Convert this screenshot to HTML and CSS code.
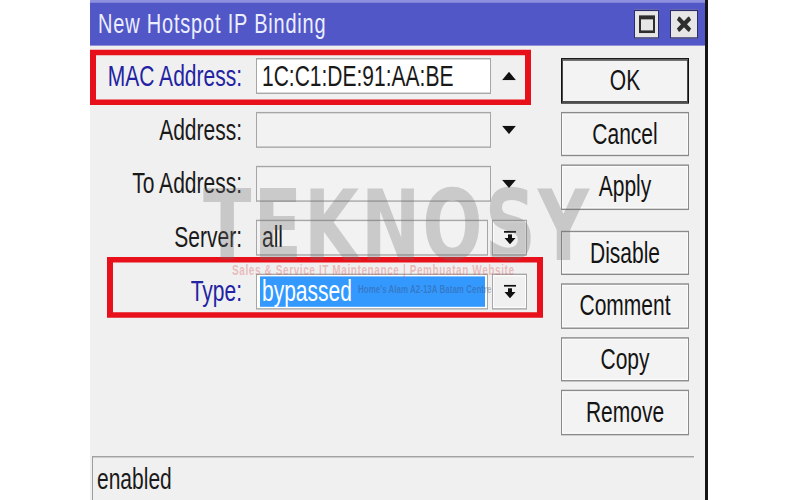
FILE: index.html
```html
<!DOCTYPE html>
<html lang="en">
<head>
  <meta charset="UTF-8">
  <title>New Hotspot IP Binding</title>
  <link rel="stylesheet" href="styles.css">
</head>
<body>

<div class="page">
<div class="window">
  <div class="titlebar">
    <span class="title">New Hotspot IP Binding</span>
    <div class="title-buttons">
      <div class="tbtn">
        <svg width="16" height="13" viewBox="0 0 16 13"><rect x="1" y="1.5" width="14" height="10.5" fill="none" stroke="#2e2e2e" stroke-width="2"/><rect x="0" y="0" width="16" height="3" fill="#2e2e2e"/></svg>
      </div>
      <div class="tbtn close">
        <svg width="18" height="11" viewBox="0 0 18 11"><path d="M3 1 L15 10 M15 1 L3 10" stroke="#2e2e2e" stroke-width="3.6"/></svg>
      </div>
    </div>
  </div>

  <div class="window-body">
    <div class="form">
      <div class="row mark mark-mac">
        <label class="blue">MAC Address:</label>
        <div class="field white">1C:C1:DE:91:AA:BE</div>
        <span class="arrow"><svg width="14" height="6" viewBox="0 0 14 6"><polygon points="0,6 14,6 7,0" fill="#111"/></svg></span>
      </div>
      <div class="row">
        <label>Address:</label>
        <div class="field"></div>
        <span class="arrow"><svg width="14" height="6" viewBox="0 0 14 6"><polygon points="0,0 14,0 7,6" fill="#111"/></svg></span>
      </div>
      <div class="row">
        <label>To Address:</label>
        <div class="field"></div>
        <span class="arrow"><svg width="14" height="6" viewBox="0 0 14 6"><polygon points="0,0 14,0 7,6" fill="#111"/></svg></span>
      </div>
      <div class="row">
        <label>Server:</label>
        <div class="field short">all</div>
        <span class="combo-btn"><svg width="12" height="10" viewBox="0 0 12 10"><rect x="0" y="0" width="12" height="1.4" fill="#111"/><rect x="4" y="2.6" width="4" height="2.8" fill="#111"/><polygon points="0.5,5.2 11.5,5.2 6,9.8" fill="#111"/></svg></span>
      </div>
      <div class="row mark mark-type">
        <label class="blue">Type:</label>
        <div class="field short white select"><span class="selected">bypassed</span></div>
        <span class="combo-btn"><svg width="12" height="10" viewBox="0 0 12 10"><rect x="0" y="0" width="12" height="1.4" fill="#111"/><rect x="4" y="2.6" width="4" height="2.8" fill="#111"/><polygon points="0.5,5.2 11.5,5.2 6,9.8" fill="#111"/></svg></span>
      </div>
    </div>

    <div class="buttons">
      <button class="default">OK</button>
      <button>Cancel</button>
      <button>Apply</button>
      <button class="spaced">Disable</button>
      <button>Comment</button>
      <button>Copy</button>
      <button>Remove</button>
    </div>
  </div>

  <div class="statusbar">
    <div class="status">enabled</div>
  </div>

  <!-- watermark stamped over the screenshot -->
  <div class="watermark">TEKNOSY</div>
  <div class="watermark-line line1">Sales &amp; Service IT Maintenance | Pembuatan Website</div>
  <div class="watermark-line line2">Home's Alam A2-13A Batam Centre</div>
</div>
</div>

</body>
</html>
```

FILE: styles.css
```css
body {
  margin: 0;
  background: #fff;
  font-family: "Liberation Sans", Arial, sans-serif;
  color: #1a1a1a;
}

.page {
  height: 500px;
  overflow: hidden;
}

/* the source shot is stretched vertically, so the window is laid out
   at natural size and scaled */
.window {
  position: relative;
  box-sizing: border-box;
  width: 618px;
  height: 362px;
  margin-left: 90px;
  background: #f0f0f0;
  border-right: 3px solid #151515;
  display: flex;
  flex-direction: column;
  overflow: hidden;
  transform: scaleY(1.382);
  transform-origin: top left;
}

.titlebar {
  box-sizing: border-box;
  height: 33px;
  background: #5257c7;
  border-top: 2px solid #8c90de;
  display: flex;
  align-items: center;
  justify-content: space-between;
  padding: 0 7px 0 8px;
}

.title {
  color: #eceeff;
  font-size: 20px;
  letter-spacing: 0.8px;
}

.title-buttons {
  display: flex;
  gap: 11px;
}

.tbtn {
  box-sizing: border-box;
  width: 25px;
  height: 21px;
  background: #e6e6e6;
  border: 1px solid #2b2d6b;
  display: flex;
  align-items: center;
  justify-content: center;
}

.tbtn.close {
  width: 28px;
}

.window-body {
  display: flex;
  padding-top: 9px;
}

.form {
  width: 471px;
  flex: none;
  display: flex;
  flex-direction: column;
  gap: 13px;
}

.row {
  position: relative;
  display: flex;
  align-items: center;
  height: 26px;
}

.row label {
  width: 152px;
  margin-right: 14px;
  text-align: right;
  font-size: 21px;
}

.row label.blue {
  color: #2323a3;
}

.field {
  box-sizing: border-box;
  width: 235px;
  height: 26px;
  padding: 0 5px;
  border: 1px solid #a6a6a6;
  background: #f2f2f2;
  font-size: 21px;
  line-height: 24px;
  white-space: nowrap;
}

.field.white {
  background: #fff;
}

.field.short {
  width: 232px;
}

.field.select {
  padding: 1px 2px 1px 3px;
}

.selected {
  display: block;
  height: 22px;
  line-height: 22px;
  padding-left: 2px;
  background: #3399ff;
  color: #fff;
}

.arrow {
  width: 36px;
  display: flex;
  justify-content: center;
}

.combo-btn {
  box-sizing: border-box;
  width: 35px;
  height: 26px;
  margin-left: 4px;
  border: 1px solid #a6a6a6;
  box-shadow: inset 0 0 0 1px #fcfcfc;
  display: flex;
  align-items: center;
  justify-content: center;
}

/* red highlight boxes */
.mark::after {
  content: '';
  position: absolute;
  box-sizing: border-box;
  border: 6px solid #e8101a;
  border-top-width: 4.5px;
  border-bottom-width: 4.5px;
}

.mark-mac::after {
  top: -6px;
  bottom: -8px;
  left: 0;
  width: 441px;
}

.mark-type::after {
  top: -12px;
  bottom: -6px;
  left: 17px;
  width: 436px;
}

.buttons {
  width: 128px;
  display: flex;
  flex-direction: column;
  gap: 6px;
}

.buttons button {
  box-sizing: border-box;
  height: 32.5px;
  padding: 0;
  font-family: inherit;
  font-size: 21px;
  color: #141414;
  background: #f3f3f3;
  border: 1px solid #8a8a8a;
  box-shadow: inset 0 0 0 1px #fbfbfb;
}

.buttons .default {
  border-color: #111;
  box-shadow: inset 0 0 0 1px #4a4a4a;
}

.buttons .spaced {
  margin-top: 9px;
}

.statusbar {
  margin-top: auto;
  height: 32px;
  display: flex;
  padding: 0 11px 0 2px;
}

.status {
  flex: 1;
  display: flex;
  align-items: center;
  padding-left: 4px;
  border-top: 1.5px solid #9e9e9e;
  border-left: 1px solid #9e9e9e;
  font-size: 21px;
}

.watermark {
  position: absolute;
  left: 113px;
  top: 128px;
  font-family: "DejaVu Sans", sans-serif;
  font-size: 71px;
  font-weight: bold;
  line-height: 1;
  letter-spacing: 2px;
  color: rgba(110, 110, 110, 0.3);
  pointer-events: none;
}

.watermark-line {
  position: absolute;
  font-size: 10px;
  font-weight: bold;
  white-space: nowrap;
  pointer-events: none;
}

.line1 {
  left: 142px;
  top: 190px;
  letter-spacing: 0.6px;
  color: rgba(215, 80, 80, 0.35);
}

.line2 {
  left: 268px;
  top: 205px;
  font-size: 8px;
  color: rgba(60, 60, 90, 0.35);
}
```
